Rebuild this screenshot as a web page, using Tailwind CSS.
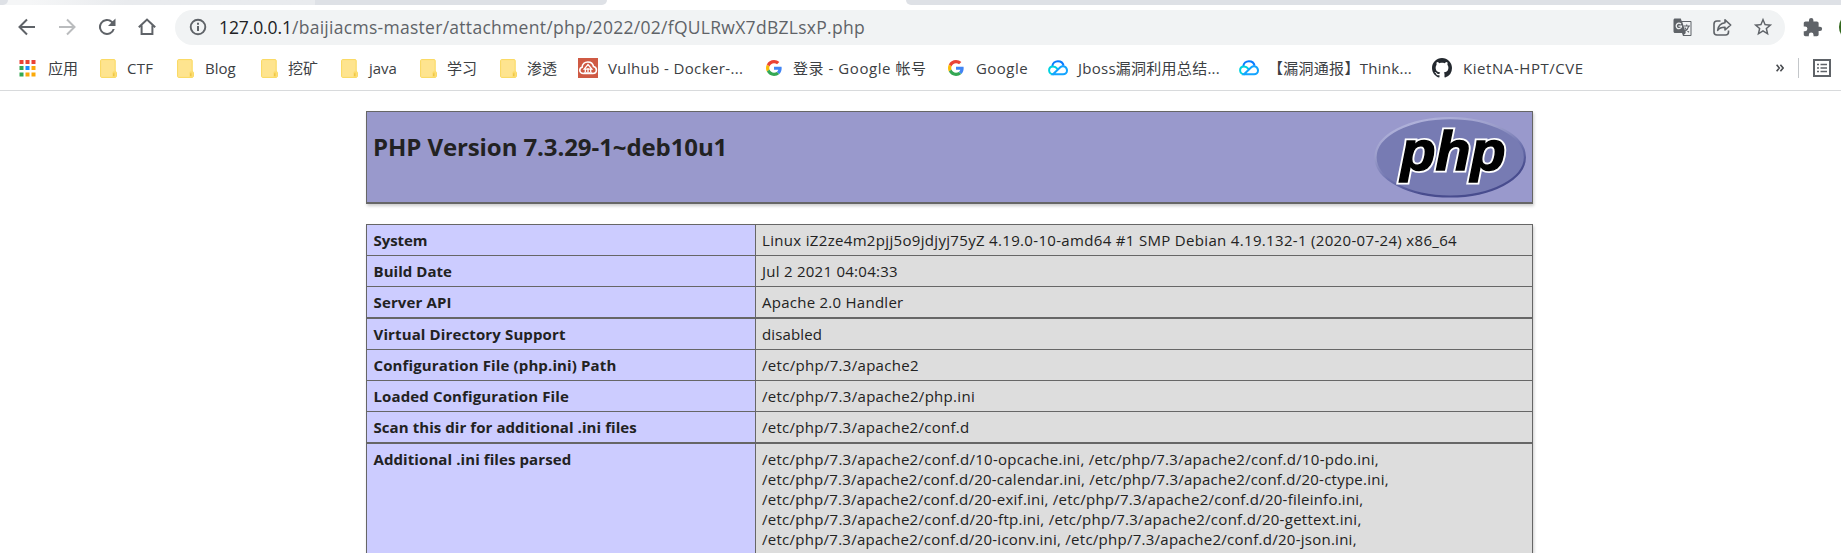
<!DOCTYPE html>
<html lang="zh-CN">
<head>
<meta charset="utf-8">
<title>PHP 7.3.29-1~deb10u1 - phpinfo()</title>
<script src="https://cdn.jsdelivr.net/npm/@tailwindcss/browser@4"></script>
</head>
<body class="flex h-screen w-[1841px] flex-col overflow-hidden bg-white font-['Open_Sans','Noto_Sans_CJK_SC',sans-serif] text-[15px] leading-5 text-[#222]">

<svg class="hidden">
  <defs>
    <symbol id="folder" viewBox="0 0 17 19">
      <path d="M1.600.6h12.600c.6 0 1 .4 1 1v10.500c.7.2 1.200.9 1.200 1.800v3.300c0 .7-.5 1.200-1.200 1.200H1.600c-.6 0-1-.4-1-1V1.600c0-.6.4-1 1-1z" fill="#fee48f" stroke="#fad85c"/>
      <path d="M12.500 18v-3.800c0-1.200.6-2 1.500-2s1.600.8 1.600 1.800v2.700c0 .8-.5 1.300-1.200 1.300z" fill="#fbdb68"/>
      <path d="M13.800 17v-2.700" stroke="#e9bd3c"/>
    </symbol>
    <symbol id="google" viewBox="0 0 48 48">
      <path fill="#EA4335" d="M24 9.500c3.540 0 6.710 1.220 9.210 3.600l6.850-6.850C35.900 2.380 30.470 0 24 0 14.620 0 6.510 5.380 2.560 13.220l7.980 6.190C12.430 13.720 17.740 9.500 24 9.500z"/>
      <path fill="#4285F4" d="M46.980 24.550c0-1.570-.15-3.090-.38-4.550H24v9.020h12.940c-.58 2.960-2.260 5.480-4.780 7.180l7.730 6c4.510-4.180 7.090-10.360 7.090-17.650z"/>
      <path fill="#FBBC05" d="M10.530 28.590c-.48-1.450-.76-2.990-.76-4.590s.27-3.140.76-4.590l-7.980-6.190C.92 16.460 0 20.120 0 24c0 3.880.92 7.540 2.560 10.780l7.970-6.190z"/>
      <path fill="#34A853" d="M24 48c6.480 0 11.930-2.130 15.890-5.810l-7.730-6c-2.150 1.450-4.920 2.300-8.160 2.300-6.260 0-11.570-4.220-13.470-9.910l-7.980 6.190C6.510 42.620 14.620 48 24 48z"/>
    </symbol>
    <symbol id="cloud" viewBox="0 0 20 16">
      <path d="M4.300 6.300C4.600 3.200 7.100 1.200 9.900 1.200c2.900 0 5.200 1.900 5.700 4.600" fill="none" stroke="#0a7bff" stroke-width="2"/>
      <path d="M9.700 9.200C8.300 7.400 6.800 6.400 5 6.400c-2.300 0-3.900 1.700-3.900 3.900s1.700 4 3.900 4h.7" fill="none" stroke="#00d2e0" stroke-width="2"/>
      <path d="M5 14.300 12.300 7.300c2.600-2.400 6.700-.6 6.700 3.200 0 2.300-1.800 3.800-3.900 3.800z" fill="none" stroke="#13a4ff" stroke-width="2"/>
    </symbol>
  </defs>
</svg>

<!-- tab strip -->
<div class="flex h-[5px] shrink-0 bg-[#dee1e6]">
  <div class="h-[5px] w-[315px] bg-linear-to-r from-[#f5f6f7] from-10% to-[#e9ebee] to-40%"><div class="h-[5px] w-2 rounded-br-lg bg-[#dee1e6]"></div></div>
  <div class="flex h-[5px] w-[599px] justify-between bg-white">
    <div class="h-[5px] w-[292px] rounded-br-md bg-[#dee1e6]"></div>
    <div class="h-[5px] w-2 rounded-bl-md bg-[#dee1e6]"></div>
  </div>
</div>

<!-- toolbar -->
<div class="flex h-[45px] shrink-0 items-center text-[#5f6368]">
  <svg class="mb-px ml-[15px] size-6 shrink-0" viewBox="0 0 24 24" fill="none" stroke="currentColor" stroke-width="2"><path d="M20 12H5M12 4.500 4.500 12l7.500 7.500"/></svg>
  <svg class="mb-px ml-4 size-6 shrink-0 text-[#babcbe]" viewBox="0 0 24 24" fill="none" stroke="currentColor" stroke-width="2"><path d="M4 12h15M12 4.500l7.500 7.500-7.500 7.500"/></svg>
  <svg class="mb-px ml-4 size-6 shrink-0" viewBox="0 0 24 24" fill="currentColor"><path d="M17.650 6.350A8 8 0 1 0 19.730 14h-2.080A6 6 0 1 1 12 6c1.660 0 3.140.69 4.220 1.780L13 11h7.500V3.500z"/></svg>
  <svg class="mb-px ml-4 size-6 shrink-0" viewBox="0 0 24 24" fill="none" stroke="currentColor" stroke-width="2"><path d="M3.800 12.300 12 4.600l8.200 7.700M6.600 10.500V19h10.800v-8.500"/></svg>
  <div class="ml-4 flex h-[35px] w-[1610px] shrink-0 items-center rounded-full bg-[#f1f3f4] pb-px text-[17.500px]">
    <svg class="ml-3.5 size-[18px] shrink-0" viewBox="0 0 18 18" fill="none" stroke="currentColor"><circle cx="9" cy="9" r="7.300" stroke-width="1.900"/><path d="M9 8v5M9 4.800v2" stroke-width="2"/></svg>
    <div class="ml-3 flex w-[1410px] shrink-0 whitespace-nowrap"><span class="tracking-[-0.1px] text-[#202124]">127.0.0.1</span><span class="tracking-[0.284px]">/baijiacms-master/attachment/php/2022/02/fQULRwX7dBZLsxP.php</span></div>
    <svg class="ml-[44px] size-[19px] shrink-0" viewBox="0 0 19 19"><path d="M2 .5h5.800l.9 2.500H17.500c.6 0 1 .4 1 1v13c0 .6-.4 1-1 1H10l-1-3H2c-.8 0-1.500-.7-1.500-1.500V2C.5 1.200 1.200.5 2 .5z" fill="#5f6368"/><path d="M9.300 4H17.500v13H10.800l2-2z" fill="#f1f3f4"/><path d="M10.500 8H17M13.700 6.500V8M15.800 8c-.6 2.500-2.300 4.400-4.300 5.500M11.800 9.500c1 2.100 2.500 3.500 4.200 4.700" fill="none" stroke="#5f6368" stroke-width="1.100"/><path d="M7.900 6.100A2.700 2.700 0 1 0 8 9.600c.3-.4.400-.9.400-1.500H5.500" fill="none" stroke="#f1f3f4" stroke-width="1.300"/></svg>
    <svg class="ml-[21px] size-[19px] shrink-0" viewBox="0 0 19 19" fill="none" stroke="currentColor" stroke-width="1.600" stroke-linejoin="round"><path d="M7.500 3H4C2.300 3 1 4.300 1 6v8c0 1.700 1.300 3 3 3h8.500c1.700 0 3-1.300 3-3v-1.500"/><path d="M12 1.800 17.700 7 12 12V9.200c-3.500-.1-5.800.8-7.300 3.100.5-4 3-7 7.300-7.500z"/></svg>
    <svg class="ml-5 size-[22px] shrink-0" viewBox="0 0 24 24" fill="currentColor"><path d="M22 9.240l-7.190-.62L12 2 9.190 8.630 2 9.240l5.460 4.730L5.820 21 12 17.270 18.180 21l-1.630-7.030L22 9.240zM12 15.400l-3.760 2.270 1-4.280-3.320-2.880 4.380-.38L12 6.100l1.710 4.040 4.380.38-3.320 2.880 1 4.280L12 15.400z"/></svg>
  </div>
  <svg class="mb-px ml-[17px] size-[21px] shrink-0" viewBox="0 0 24 24" fill="currentColor"><path d="M20.500 11H19V7c0-1.100-.9-2-2-2h-4V3.500a2.500 2.500 0 0 0-5 0V5H4c-1.100 0-2 .9-2 2v3.800h1.500a2.700 2.700 0 0 1 0 5.400H2V20c0 1.100.9 2 2 2h3.800v-1.500a2.700 2.700 0 0 1 5.400 0V22H17c1.100 0 2-.9 2-2v-4h1.500a2.500 2.500 0 0 0 0-5z"/></svg>
  <div class="mb-px ml-4 size-7 shrink-0 rounded-full bg-[#33691e]"></div>
</div>

<!-- bookmarks bar -->
<div class="flex h-[41px] shrink-0 items-center border-b border-[#d8dadc] pb-1 pl-[19px] whitespace-nowrap text-[#3c4043]">
  <div class="flex w-[81px] shrink-0 items-center">
    <svg class="mr-3 size-[17px]" viewBox="0 0 17 17"><path fill="#ea4335" d="M.5 0h4v4h-4zM6.500 0h4v4h-4zM12.500 0h4v4h-4z"/><path fill="#34a853" d="M.5 6h4v4h-4zM.5 12.500h4v4h-4z"/><path fill="#1a8cff" d="M6.500 6h4v4h-4z"/><path fill="#fba909" d="M12.500 6h4v4h-4zM6.500 12.500h4v4h-4zM12.500 12.500h4v4h-4z"/></svg>应用
  </div>
  <div class="flex w-[77px] shrink-0 items-center"><svg class="mr-2.5 h-[19px] w-[17px]"><use href="#folder"/></svg><span class="tracking-[0.300px]">CTF</span></div>
  <div class="flex w-[84px] shrink-0 items-center"><svg class="mr-[11px] h-[19px] w-[17px]"><use href="#folder"/></svg>Blog</div>
  <div class="flex w-20 shrink-0 items-center"><svg class="mr-2.5 h-[19px] w-[17px]"><use href="#folder"/></svg>挖矿</div>
  <div class="flex w-[79px] shrink-0 items-center"><svg class="mr-[11px] h-[19px] w-[17px]"><use href="#folder"/></svg>java</div>
  <div class="flex w-20 shrink-0 items-center"><svg class="mr-2.5 h-[19px] w-[17px]"><use href="#folder"/></svg>学习</div>
  <div class="flex w-[78px] shrink-0 items-center"><svg class="mr-2.5 h-[19px] w-[17px]"><use href="#folder"/></svg>渗透</div>
  <div class="flex w-[188px] shrink-0 items-center">
    <svg class="mr-2.5 size-5" viewBox="0 0 20 20"><path fill="#cf5a44" d="M0 0h20v20H0z"/><path d="M5.500 15.500C3 15.500 1.800 14 1.800 12.300c0-1.600 1-2.700 2.300-3C4.300 6 6.800 4 9.800 4c3 0 5.200 1.700 5.700 4.500 1.800.3 2.900 1.700 2.900 3.600 0 2-1.300 3.400-3.600 3.400z" fill="none" stroke="#fff" stroke-width="1.600"/><path d="M5.800 14.800h8.400M7.300 14v-3M10 14v-4M12.700 14v-3M6.200 11.200h7.600L10 6.600z" fill="none" stroke="#fff" stroke-width="1.300"/></svg><span class="tracking-[0.370px]">Vulhub - Docker-...</span>
  </div>
  <div class="flex w-[182px] shrink-0 items-center"><svg class="mr-[11px] size-4"><use href="#google"/></svg><span class="tracking-[0.550px]">登录 - Google 帐号</span></div>
  <div class="flex w-[100px] shrink-0 items-center"><svg class="mr-3 size-4"><use href="#google"/></svg><span class="tracking-[0.450px]">Google</span></div>
  <div class="flex w-[191px] shrink-0 items-center"><svg class="mr-2.5 h-4 w-5"><use href="#cloud"/></svg><span class="tracking-[0.260px]">Jboss漏洞利用总结...</span></div>
  <div class="flex w-[193px] shrink-0 items-center"><svg class="mr-[9px] h-4 w-5"><use href="#cloud"/></svg><span class="tracking-[0.280px]">【漏洞通报】Think...</span></div>
  <div class="flex w-[342px] shrink-0 items-center">
    <svg class="mr-[11px] size-5" viewBox="0 0 16 16" fill="#24292f"><path d="M8 0C3.580 0 0 3.580 0 8c0 3.540 2.290 6.530 5.470 7.590.4.070.55-.17.55-.38 0-.19-.01-.82-.01-1.490-2.010.37-2.530-.49-2.690-.94-.09-.23-.48-.94-.82-1.130-.28-.15-.68-.52-.01-.53.63-.01 1.080.58 1.230.82.72 1.210 1.870.87 2.330.66.07-.52.28-.87.51-1.070-1.780-.2-3.640-.89-3.640-3.950 0-.87.31-1.590.82-2.150-.08-.2-.36-1.020.08-2.120 0 0 .67-.21 2.200.82.64-.18 1.320-.27 2-.27s1.360.09 2 .27c1.530-1.040 2.200-.82 2.200-.82.44 1.100.16 1.920.08 2.120.51.56.82 1.270.82 2.150 0 3.070-1.870 3.750-3.650 3.950.29.25.54.73.54 1.480 0 1.070-.01 1.930-.01 2.200 0 .21.15.46.55.38A8.010 8.010 0 0 0 16 8c0-4.420-3.580-8-8-8z"/></svg><span class="tracking-[0.560px]">KietNA-HPT/CVE</span>
  </div>
  <svg class="ml-0.5 h-2 w-2 shrink-0" viewBox="0 0 8 8" fill="none" stroke="#4a4d51" stroke-width="1.600"><path d="M.6.7 3.300 4 .6 7.300M4.400.7 7.100 4 4.400 7.300"/></svg>
  <div class="ml-3.5 h-5 w-px shrink-0 bg-[#c4c7ca]"></div>
  <svg class="ml-3.5 size-[18px] shrink-0" viewBox="0 0 18 18" stroke="#5f6368" fill="none"><path d="M1 1h16v16H1z" stroke-width="2"/><path d="M4 5.500h2M4 9h2M4 12.500h2M7.500 5.500h6.500M7.500 9h6.500M7.500 12.500h6.500" stroke-width="1.500"/></svg>
</div>

<!-- phpinfo page -->
<main class="ml-[366px] flex w-[1167px] flex-col pt-5">
  <header class="flex h-[93px] shrink-0 justify-between border border-b-2 border-[#666] bg-[#9999cc] shadow-[1px_2px_3px_#ccc]">
    <h1 class="ml-[6px] mt-[19px] text-[24px] leading-8 font-bold tracking-[-0.090px] whitespace-nowrap">PHP Version 7.3.29-1~deb10u1</h1>
    <svg class="mt-[5px] mr-1.5 h-[81px] w-[152px]" viewBox="0 0 152 81">
      <defs>
        <linearGradient id="rim" x1=".25" y1="0" x2=".75" y2="1"><stop offset="0" stop-color="#b2b4dc"/><stop offset=".3" stop-color="#9c9ecb"/><stop offset=".55" stop-color="#7075b0"/><stop offset=".8" stop-color="#484c8e"/></linearGradient>
      </defs>
      <ellipse cx="76.200" cy="40.300" rx="74.700" ry="39.200" fill="#777bb3" stroke="url(#rim)" stroke-width="2.200"/>
      <g font-family="Liberation Sans" font-size="56" font-weight="bold" font-style="italic" stroke-linejoin="miter">
        <text x="26.500" y="52.500" textLength="105" lengthAdjust="spacingAndGlyphs" fill="#fff" stroke="#fff" stroke-width="5">php</text>
        <text x="26.500" y="52.500" textLength="105" lengthAdjust="spacingAndGlyphs" fill="#000" stroke="#000" stroke-width="1.400" aria-hidden="true">php</text>
      </g>
    </svg>
  </header>

  <table class="mt-5 w-[1167px] border-separate border-spacing-0 border-x border-[#666] text-left align-top shadow-[1px_2px_3px_#ccc] [&_td]:h-[31px] [&_td]:border-t [&_td]:border-[#666] [&_td]:bg-[#ddd] [&_td]:px-1.5 [&_td]:py-[5px] [&_td]:tracking-[0.260px] [&_td]:whitespace-nowrap [&_th]:w-[389px] [&_th]:border-t [&_th]:border-r [&_th]:border-[#666] [&_th]:bg-[#ccccff] [&_th]:pr-1.5 [&_th]:pl-[6.500px] [&_th]:py-[5px] [&_th]:align-top [&_th]:tracking-[0.130px]">
    <tbody>
      <tr><th><span class="tracking-[-0.060px]">System</span></th><td><span class="tracking-[0.326px]">Linux iZ2ze4m2pjj5o9jdjyj75yZ 4.19.0-10-amd64 #1 SMP Debian 4.19.132-1 (2020-07-24) x86_64</span></td></tr>
      <tr><th><span class="tracking-[0.050px]">Build Date</span></th><td>Jul 2 2021 04:04:33</td></tr>
      <tr><th>Server API</th><td>Apache 2.0 Handler</td></tr>
      <tr class="*:border-t-2!"><th>Virtual Directory Support</th><td><span class="tracking-[0.140px]">disabled</span></td></tr>
      <tr><th>Configuration File (php.ini) Path</th><td><span class="tracking-[0.300px]">/etc/php/7.3/apache2</span></td></tr>
      <tr><th>Loaded Configuration File</th><td><span class="tracking-[0.300px]">/etc/php/7.3/apache2/php.ini</span></td></tr>
      <tr><th><span class="tracking-[0.070px]">Scan this dir for additional .ini files</span></th><td><span class="tracking-[0.280px]">/etc/php/7.3/apache2/conf.d</span></td></tr>
      <tr class="*:border-t-2!"><th><span class="tracking-[0.090px]">Additional .ini files parsed</span></th><td>
        <span class="tracking-[0.280px]">/etc/php/7.3/apache2/conf.d/10-opcache.ini, /etc/php/7.3/apache2/conf.d/10-pdo.ini,</span><br>
        <span class="tracking-[0.241px]">/etc/php/7.3/apache2/conf.d/20-calendar.ini, /etc/php/7.3/apache2/conf.d/20-ctype.ini,</span><br>
        <span class="tracking-[0.240px]">/etc/php/7.3/apache2/conf.d/20-exif.ini, /etc/php/7.3/apache2/conf.d/20-fileinfo.ini,</span><br>
        <span class="tracking-[0.280px]">/etc/php/7.3/apache2/conf.d/20-ftp.ini, /etc/php/7.3/apache2/conf.d/20-gettext.ini,</span><br>
        <span class="tracking-[0.257px]">/etc/php/7.3/apache2/conf.d/20-iconv.ini, /etc/php/7.3/apache2/conf.d/20-json.ini,</span>
      </td></tr>
    </tbody>
  </table>
</main>
</body>
</html>
